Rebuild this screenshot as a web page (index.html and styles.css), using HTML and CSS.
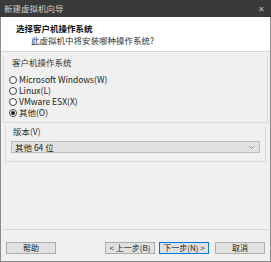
FILE: index.html
```html
<!DOCTYPE html>
<html lang="zh-CN">
<head>
    <meta charset="UTF-8">
    <title>新建虚拟机向导</title>
    <link rel="stylesheet" href="styles.css">
</head>
<body>
    <div class="window">
        <div class="titlebar">
            <span>新建虚拟机向导</span>
            <span class="close">&#x2715;</span>
        </div>

        <div class="header">
            <div class="header-title">选择客户机操作系统</div>
            <div class="header-sub">此虚拟机中将安装哪种操作系统?</div>
        </div>

        <div class="body">
            <div class="group">
                <div class="group-label">客户机操作系统</div>
                <label class="radio"><span class="dot"></span>Microsoft Windows(W)</label>
                <label class="radio"><span class="dot"></span>Linux(L)</label>
                <label class="radio"><span class="dot"></span>VMware ESX(X)</label>
                <label class="radio"><span class="dot checked"></span>其他(O)</label>
            </div>

            <div class="group version">
                <div class="group-label">版本(V)</div>
                <div class="select">
                    <span>其他 64 位</span>
                    <svg width="7" height="5" viewBox="0 0 7 5"><path d="M1 1 L3.5 3.5 L6 1" fill="none" stroke="#999" stroke-width="1"/></svg>
                </div>
            </div>
        </div>

        <div class="footer">
            <button class="btn">帮助</button>
            <div class="spacer"></div>
            <button class="btn">&lt; 上一步(B)</button>
            <button class="btn primary">下一步(N) &gt;</button>
            <button class="btn cancel">取消</button>
        </div>
    </div>
</body>
</html>
```

FILE: styles.css
```css
html, body {
    margin: 0;
    padding: 0;
}

body {
    width: 271px;
    height: 262px;
    font-family: "Noto Sans CJK SC", "Noto Sans", sans-serif;
    font-size: 8.5px;
    color: #222;
    background-color: #f0f0f0;
}

.window {
    box-sizing: border-box;
    width: 271px;
    height: 262px;
    display: flex;
    flex-direction: column;
    border-left: 1px solid #8a8a8a;
    border-right: 1px solid #8a8a8a;
    border-bottom: 1px solid #8a8a8a;
    background-color: #f0f0f0;
}

.titlebar {
    height: 17px;
    background-color: #3a3a3a;
    color: #cfcfcf;
    display: flex;
    align-items: center;
    justify-content: space-between;
    padding: 0 6px 0 4px;
    margin: 0 -1px;
    line-height: 1;
}

.close {
    font-size: 8px;
    color: #bbb;
}

.header {
    height: 34px;
    background-color: #ffffff;
    border-bottom: 1px solid #d5d5d5;
    display: flex;
    flex-direction: column;
    justify-content: center;
    gap: 3px;
    line-height: 1;
}

.header-title {
    font-weight: bold;
    padding-left: 15px;
    color: #111;
}

.header-sub {
    padding-left: 30px;
    color: #333;
}

.body {
    flex: 1;
    padding: 4px 2px 0 2px;
    display: flex;
    flex-direction: column;
    gap: 3px;
}

.group {
    border: 1px solid #dcdcdc;
    border-top: none;
    padding: 0 5px 4px 5px;
    display: flex;
    flex-direction: column;
    line-height: 11px;
}

.group-label {
    padding: 1px 0 6px 3px;
    color: #333;
}

.radio {
    display: flex;
    align-items: center;
    gap: 2px;
    height: 11px;
    line-height: 11px;
    color: #222;
}

.dot {
    box-sizing: border-box;
    width: 8px;
    height: 8px;
    border: 1px solid #444;
    border-radius: 50%;
    background-color: #fff;
    display: flex;
    align-items: center;
    justify-content: center;
}

.dot.checked::after {
    content: "";
    width: 4px;
    height: 4px;
    border-radius: 50%;
    background-color: #222;
}

.version {
    margin: 0 2px;
    padding-bottom: 8px;
}

.version .group-label {
    padding: 0 0 4px 2px;
}

.select {
    height: 12px;
    box-sizing: border-box;
    border: 1px solid #bcbcbc;
    background-color: #e2e2e2;
    display: flex;
    align-items: center;
    justify-content: space-between;
    padding: 0 4px 0 3px;
}

.footer {
    border-top: 1px solid #d8d8d8;
    margin: 0 1px;
    height: 27px;
    display: flex;
    align-items: center;
    padding: 4px 4px 0 4px;
    gap: 4px;
}

.spacer {
    flex: 1;
}

.btn {
    font-family: inherit;
    font-size: 8px;
    line-height: 1;
    height: 12px;
    width: 50px;
    padding: 0;
    border: 1px solid #adadad;
    background-color: #e1e1e1;
    color: #222;
}

.btn.primary {
    border-color: #0078d7;
    box-shadow: inset 0 0 0 1px #cce4f7;
}

.btn.cancel {
    margin-left: 2px;
}
```
